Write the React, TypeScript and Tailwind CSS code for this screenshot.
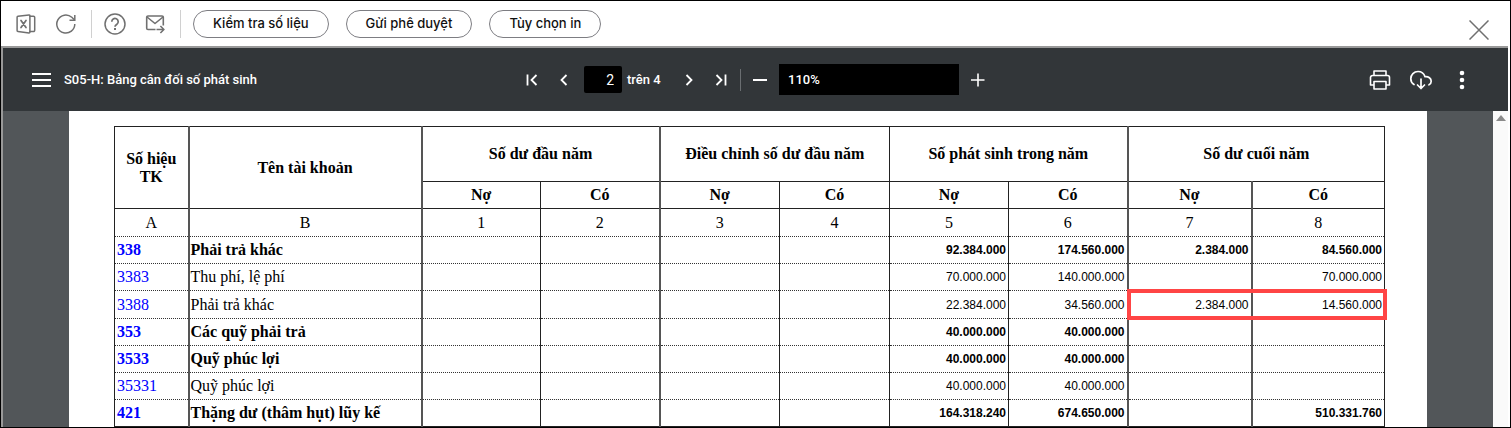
import React, { useState } from 'react';
import { clsx } from 'clsx';

interface AccountRow {
  code: string;
  name: string;
  values: string[];
  bold?: boolean;
  highlight?: boolean;
}

const columns = [
  { width: 'w-[74px]', edge: 'border-r-2 border-r-[#555]' },
  { width: 'w-[233px]', edge: 'border-r-2 border-r-[#555]' },
  { width: 'w-[119px]', edge: 'border-r border-r-[#222]' },
  { width: 'w-[119px]', edge: 'border-r-2 border-r-[#555]' },
  { width: 'w-[120px]', edge: 'border-r border-r-[#222]' },
  { width: 'w-[110px]', edge: 'border-r border-r-[#222]' },
  { width: 'w-[119px]', edge: 'border-r border-r-[#222]' },
  { width: 'w-[119px]', edge: 'border-r-2 border-r-[#555]' },
  { width: 'w-[124px]', edge: 'border-r-2 border-r-[#555]' },
  { width: 'w-[133px]', edge: 'border-r border-r-[#222]' },
];

const groups = ['Số dư đầu năm', 'Điều chỉnh số dư đầu năm', 'Số phát sinh trong năm', 'Số dư cuối năm'];

const columnMarks = ['A', 'B', '1', '2', '3', '4', '5', '6', '7', '8'];

const rows: AccountRow[] = [
  { code: '338', name: 'Phải trả khác', values: ['', '', '', '', '92.384.000', '174.560.000', '2.384.000', '84.560.000'], bold: true },
  { code: '3383', name: 'Thu phí, lệ phí', values: ['', '', '', '', '70.000.000', '140.000.000', '', '70.000.000'] },
  { code: '3388', name: 'Phải trả khác', values: ['', '', '', '', '22.384.000', '34.560.000', '2.384.000', '14.560.000'], highlight: true },
  { code: '353', name: 'Các quỹ phải trả', values: ['', '', '', '', '40.000.000', '40.000.000', '', ''], bold: true },
  { code: '3533', name: 'Quỹ phúc lợi', values: ['', '', '', '', '40.000.000', '40.000.000', '', ''], bold: true },
  { code: '35331', name: 'Quỹ phúc lợi', values: ['', '', '', '', '40.000.000', '40.000.000', '', ''] },
  { code: '421', name: 'Thặng dư (thâm hụt) lũy kế', values: ['', '', '', '', '164.318.240', '674.650.000', '', '510.331.760'], bold: true },
];

const IconButton: React.FC<{ label: string; className?: string; children: React.ReactNode }> = ({
  label,
  className,
  children,
}) => (
  <button aria-label={label} className={clsx('flex shrink-0 items-center justify-center', className)}>
    {children}
  </button>
);

const Toolbar = () => (
  <div className="flex h-[45px] shrink-0 items-center pr-5 pl-[14px] text-[#707070]">
    <div className="flex items-center gap-[18px]">
      <IconButton label="Excel" className="size-[22px]">
        <svg width="20" height="20" viewBox="0 0 20 20" fill="none" stroke="currentColor" strokeWidth="1.5" strokeLinejoin="round" strokeLinecap="round">
          <path d="M2 2.200L13 .900a.800.800 0 0 1 .900.800v16.400a.800.800 0 0 1-.900.800L2 17.600a1 1 0 0 1-.900-1V3.200a1 1 0 0 1 .900-1z" />
          <path d="M14 2.300h3.500a1.200 1.200 0 0 1 1.200 1.200v12.800a1.200 1.200 0 0 1-1.200 1.200H14" />
          <path d="M5 6.400l5 7.200M10 6.400l-5 7.200" strokeWidth="1.700" />
        </svg>
      </IconButton>
      <IconButton label="Refresh" className="size-[22px]">
        <svg width="20" height="20" viewBox="0 0 20 20" fill="none" stroke="currentColor" strokeWidth="1.5">
          <path d="M18.800 10A9 9 0 1 1 15.800 3.300L18.600 6" />
          <path d="M18.800 1v5.300h-5.300" />
        </svg>
      </IconButton>
    </div>
    <div className="mr-3 ml-[14px] h-7 w-px bg-[#d0d0d0]" />
    <div className="flex items-center gap-[18px]">
      <IconButton label="Help" className="size-[22px]">
        <svg width="22" height="22" viewBox="0 0 22 22" fill="none" stroke="currentColor" strokeWidth="1.5">
          <circle cx="11" cy="11" r="10" />
          <path d="M7.800 8.800a3.200 3.200 0 1 1 5.200 2.400c-1.200.8-2 1.300-2 2.500" strokeWidth="1.700" />
          <path d="M10 15l2 2M12 15l-2 2" strokeWidth="1" />
        </svg>
      </IconButton>
      <IconButton label="Send mail" className="size-[22px]">
        <svg width="20" height="20" viewBox="0 0 20 20" fill="none" stroke="currentColor" strokeWidth="1.6" strokeLinejoin="round">
          <path d="M10.500 15.500H3A1.300 1.300 0 0 1 1.700 14.200V3.300A1.300 1.300 0 0 1 3 2H17A1.300 1.300 0 0 1 18.300 3.300V11.500" />
          <path d="M2 3l8 6.500 8-6.500" />
          <path d="M11.500 15.500h7M15.400 12l3.500 3.500-3.500 3.500" />
        </svg>
      </IconButton>
    </div>
    <div className="mr-3 ml-[14px] h-7 w-px bg-[#d0d0d0]" />
    <div className="flex items-center gap-[17px]">
      {['Kiểm tra số liệu', 'Gửi phê duyệt', 'Tùy chọn in'].map((label) => (
        <button
          key={label}
          className="h-7 rounded-full border border-[#7d7d82] px-[19px] font-['Inter',sans-serif] text-[13px] font-medium whitespace-nowrap text-[#111]"
        >
          {label}
        </button>
      ))}
    </div>
    <IconButton label="Close" className="mt-3 ml-auto size-[22px]">
      <svg width="20" height="20" viewBox="0 0 20 20" fill="none" stroke="currentColor" strokeWidth="1.5">
        <path d="M.5.5l19 19M19.500.5l-19 19" />
      </svg>
    </IconButton>
  </div>
);

const ViewerHeader = () => {
  const [page, setPage] = useState('2');
  const [zoom, setZoom] = useState('110');

  return (
    <div className="flex h-[63px] shrink-0 items-center bg-[#323639] font-['Roboto',sans-serif] text-[13px] font-medium text-white">
      <div className="flex flex-1 items-center gap-3 pl-[29px]">
        <IconButton label="Menu">
          <svg width="20" height="16" viewBox="0 0 20 16" fill="currentColor">
            <path d="M0 1h19v2H0zM0 7h19v2H0zM0 13h19v2H0z" />
          </svg>
        </IconButton>
        <span>S05-H: Bảng cân đối số phát sinh</span>
      </div>

      <div className="flex items-center">
        <IconButton label="First page" className="size-8">
          <svg width="12" height="12" viewBox="0 0 12 12" fill="none" stroke="currentColor" strokeWidth="1.8">
            <path d="M1.500.5v11M10.500 1L5.500 6l5 5" />
          </svg>
        </IconButton>
        <IconButton label="Previous page" className="size-8">
          <svg width="12" height="12" viewBox="0 0 12 12" fill="none" stroke="currentColor" strokeWidth="1.8">
            <path d="M8.500 1l-5 5 5 5" />
          </svg>
        </IconButton>
        <input
          aria-label="Page"
          value={page}
          onChange={(e) => setPage(e.target.value)}
          className="ml-1 h-[27px] w-[38px] rounded-xs bg-black pr-2 text-right text-sm font-normal outline-none"
        />
        <span className="ml-[5px] w-[46px] whitespace-nowrap">trên 4</span>
        <IconButton label="Next page" className="size-8">
          <svg width="12" height="12" viewBox="0 0 12 12" fill="none" stroke="currentColor" strokeWidth="1.8">
            <path d="M3.500 1l5 5-5 5" />
          </svg>
        </IconButton>
        <IconButton label="Last page" className="size-8">
          <svg width="12" height="12" viewBox="0 0 12 12" fill="none" stroke="currentColor" strokeWidth="1.800">
            <path d="M10.500.5v11M1.500 1l5 5-5 5" />
          </svg>
        </IconButton>
        <div className="mx-[3px] h-[22px] w-px bg-[#6a6e71]" />
        <IconButton label="Zoom out" className="size-8">
          <svg width="14" height="14" viewBox="0 0 14 14" fill="currentColor">
            <path d="M0 6h14v2H0z" />
          </svg>
        </IconButton>
        <select
          aria-label="Zoom"
          value={zoom}
          onChange={(e) => setZoom(e.target.value)}
          className="mx-[3px] h-[31px] w-[180px] appearance-none bg-black px-[9px] outline-none"
        >
          <option value="100">100%</option>
          <option value="110">110%</option>
          <option value="125">125%</option>
        </select>
        <IconButton label="Zoom in" className="size-8">
          <svg width="14" height="14" viewBox="0 0 14 14" fill="none" stroke="currentColor" strokeWidth="1.600">
            <path d="M0 7h13.500M7 .5v13" />
          </svg>
        </IconButton>
      </div>

      <div className="flex flex-1 items-center justify-end gap-[9px] pr-[30px]">
        <IconButton label="Print" className="size-8">
          <svg width="22" height="22" viewBox="0 0 22 22" fill="none" stroke="currentColor" strokeWidth="1.600" strokeLinejoin="round">
            <path d="M5 6.500V2h12v4.500" />
            <path d="M5 16H1.500V8.500a2 2 0 0 1 2-2h15a2 2 0 0 1 2 2V16H17" />
            <path d="M5 12.500h12V20H5z" />
          </svg>
        </IconButton>
        <IconButton label="Download" className="size-8">
          <svg width="24" height="22" viewBox="0 0 24 22" fill="none" stroke="currentColor" strokeWidth="1.700" strokeLinecap="round" strokeLinejoin="round">
            <path d="M5 15.500C2.800 14.200 1.800 12 1.800 9.700 1.800 5.600 5 2.500 9 2.500c3.400 0 6 2.100 7 5.200 3.500-.4 6.200 1.800 6.200 4.600 0 1.700-.8 2.900-2.200 3.500" />
            <path d="M12 10v9.500M8.500 16l3.500 3.500 3.500-3.500" />
          </svg>
        </IconButton>
        <IconButton label="More" className="size-8">
          <svg width="6" height="20" viewBox="0 0 6 20" fill="currentColor">
            <circle cx="3" cy="3" r="2.300" />
            <circle cx="3" cy="10" r="2.300" />
            <circle cx="3" cy="17" r="2.300" />
          </svg>
        </IconButton>
      </div>
    </div>
  );
};

const BalanceTable = () => (
  <table className="w-full table-fixed border-collapse border border-[#222] font-['Liberation_Serif',serif] text-base leading-[18px] text-black">
    <colgroup>
      {columns.map((col, i) => (
        <col key={i} className={col.width} />
      ))}
    </colgroup>
    <thead>
      <tr className="h-[55px] border-b border-[#222]">
        <th rowSpan={2} className={columns[0].edge}>
          Số hiệu TK
        </th>
        <th rowSpan={2} className={columns[1].edge}>
          Tên tài khoản
        </th>
        {groups.map((group, i) => (
          <th key={group} colSpan={2} className={clsx('border-b border-b-[#222]', columns[i * 2 + 3].edge)}>
            {group}
          </th>
        ))}
      </tr>
      <tr className="h-[27px] border-b border-[#222]">
        {groups.map((group, i) => (
          <React.Fragment key={group}>
            <th className={columns[i * 2 + 2].edge}>Nợ</th>
            <th className={columns[i * 2 + 3].edge}>Có</th>
          </React.Fragment>
        ))}
      </tr>
      <tr className="h-7">
        {columnMarks.map((mark, i) => (
          <td key={mark} className={clsx('border-b border-b-[#333] text-center [border-bottom-style:dotted]', columns[i].edge)}>
            {mark}
          </td>
        ))}
      </tr>
    </thead>
    <tbody>
      {rows.map((row) => (
        <tr key={row.code} className={clsx(row.highlight ? 'h-7' : 'h-[27px]', row.bold && 'font-bold')}>
          <td className={clsx('border-b border-b-[#333] pl-0.5 text-[#0000ff] [border-bottom-style:dotted]', columns[0].edge)}>
            {row.code}
          </td>
          <td className={clsx('border-b border-b-[#333] pl-px whitespace-nowrap [border-bottom-style:dotted]', columns[1].edge)}>
            {row.name}
          </td>
          {row.values.map((value, i) => (
            <td
              key={i}
              className={clsx(
                "relative border-b border-b-[#333] pr-0.5 text-right font-['Liberation_Sans',sans-serif] text-xs leading-[18px] [border-bottom-style:dotted]",
                columns[i + 2].edge
              )}
            >
              {value}
              {row.highlight && i === 6 && (
                <span className="absolute -inset-y-[2px] -right-px -left-[2px] border-y-4 border-l-4 border-[#ff4545]" />
              )}
              {row.highlight && i === 7 && (
                <span className="absolute -inset-y-[2px] -right-[3px] -left-px border-y-4 border-r-4 border-[#ff4545]" />
              )}
            </td>
          ))}
        </tr>
      ))}
    </tbody>
  </table>
);

const App: React.FC = () => (
  <div className="flex h-screen flex-col overflow-hidden border border-black bg-white">
    <Toolbar />
    <div className="mr-0.5 flex min-h-0 flex-1 flex-col border-t-2 border-l-2 border-[#999]">
      <ViewerHeader />
      <div className="flex min-h-0 flex-1">
        <div className="min-w-0 flex-1 overflow-hidden bg-[#525659] px-[66px]">
          <div className="min-h-full bg-white pt-[15px] pr-[42px] pl-[45px]">
            <BalanceTable />
          </div>
        </div>
        <div className="flex w-[15px] shrink-0 justify-center bg-[#fafafa] pt-1">
          <svg width="10" height="6" viewBox="0 0 10 6" fill="#8a8a8a">
            <path d="M0 6l5-6 5 6z" />
          </svg>
        </div>
      </div>
    </div>
  </div>
);

export default App;
